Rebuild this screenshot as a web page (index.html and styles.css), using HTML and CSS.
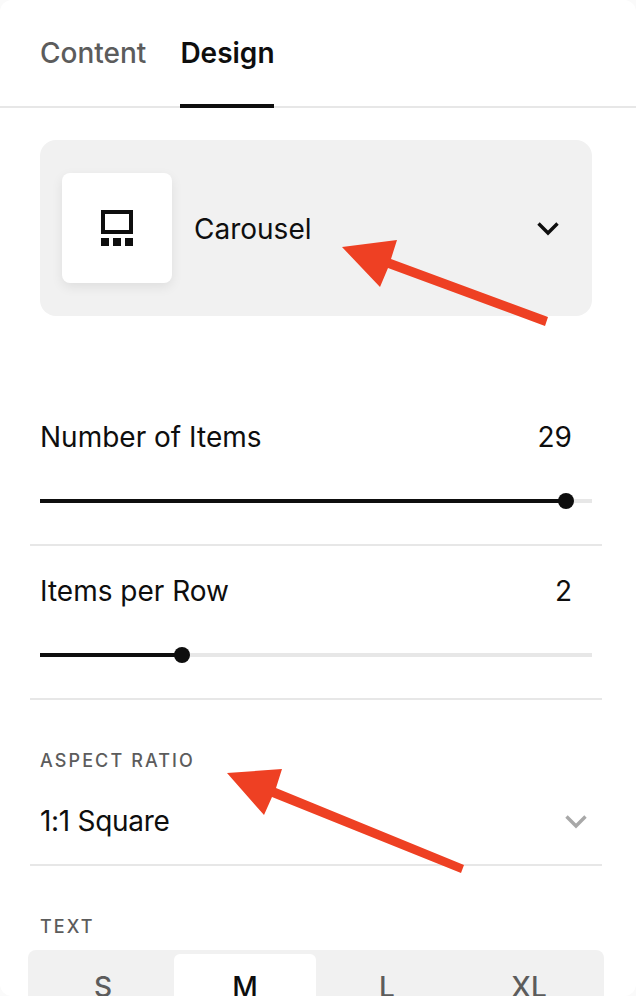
FILE: index.html
```html
<!DOCTYPE html>
<html lang="en">
<head>
<meta charset="utf-8">
<title>Design panel</title>
<link rel="stylesheet" href="styles.css">
</head>
<body>
<div class="panel">
  <nav class="tabs">
    <span class="tab">Content</span>
    <span class="tab active">Design</span>
  </nav>
  <div class="layout-card">
    <div class="icon-box">
      <svg width="32" height="36" viewBox="0 0 32 36" class="carousel-icon"><path fill="#0e0e0e" fill-rule="evenodd" d="M0 0h32v24H0zM4 4v16h24V4z"/><path fill="#0e0e0e" d="M0 28h8v8H0zM12 28h8v8h-8zM24 28h8v8h-8z"/></svg>
    </div>
    <span class="layout-name">Carousel</span>
    <svg class="chev-dark" width="22" height="15" viewBox="0 0 22 15"><path d="M1.5 2.5l9.5 9.5 9.5-9.5" fill="none" stroke="#0e0e0e" stroke-width="3.4"/></svg>
  </div>
  <section class="slider-row first">
    <div class="slider-head"><span>Number of Items</span><span class="val">29</span></div>
    <div class="track"><div class="fill fill-items"><i class="thumb"></i></div></div>
  </section>
  <section class="slider-row">
    <div class="slider-head"><span>Items per Row</span><span class="val">2</span></div>
    <div class="track"><div class="fill fill-row"><i class="thumb"></i></div></div>
  </section>
  <section class="select-row">
    <div class="caps">ASPECT RATIO</div>
    <div class="select-value"><span class="select-text">1:1 Square</span>
      <svg width="22" height="15" viewBox="0 0 22 15"><path d="M1.5 2.5l9.5 9.5 9.5-9.5" fill="none" stroke="#a8a8a8" stroke-width="3.4"/></svg>
    </div>
  </section>
  <section class="text-row">
    <div class="caps">TEXT</div>
    <div class="segments">
      <span class="seg">S</span><span class="seg on">M</span><span class="seg">L</span><span class="seg">XL</span>
    </div>
  </section>
  <svg class="arrows" width="636" height="996" viewBox="0 0 636 996">
    <path fill="#ee4023" d="M342 247L397 240L391 259L548 317L545 326L388 268L380 287z"/>
    <path fill="#ee4023" d="M227 773L282 769L276 788L464 865L461 873L272 797L264 815z"/>
  </svg>
</div>
</body>
</html>
```
FILE: styles.css
```css
* { box-sizing: border-box; }
html, body { margin: 0; height: 100%; }
body { background: #fafafa; overflow: hidden; font-family: Inter, "Liberation Sans", sans-serif; color: #0e0e0e; }
.panel { position: relative; width: 636px; height: 996px; background: #fff; border-radius: 12px; overflow: hidden; }
.tabs { display: flex; gap: 34px; height: 108px; padding-left: 40px; border-bottom: 2px solid #e7e7e7; }
.tab { height: 108px; padding-top: 35px; font-size: 28px; line-height: 36px; font-weight: 500; color: #5c5c5c; }
.tab.active { color: #0e0e0e; border-bottom: 4px solid #0e0e0e; width: 94px; font-weight: 600; }
.layout-card { display: flex; align-items: center; height: 176px; margin: 32px 44px 0 40px; padding: 0 33px 0 22px; border-radius: 16px; background: #f1f1f1; }
.icon-box { display: flex; align-items: center; justify-content: center; width: 110px; height: 110px; border-radius: 8px; background: #fff; box-shadow: 0 4px 12px rgba(0,0,0,.08); }
.layout-name { flex: 1; margin-left: 22px; padding-top: 2px; font-size: 28px; line-height: 34px; }
.slider-row { height: 154px; margin: 0 34px 0 30px; padding: 0 10px; border-bottom: 2px solid #e7e7e7; }
.slider-row.first { margin-top: 76px; height: 154px; }
.slider-head { display: flex; justify-content: space-between; padding: 28px 20px 0 0; font-size: 28px; line-height: 34px; }
.track { position: relative; height: 4px; margin-top: 45px; background: #e7e7e7; }
.fill { position: relative; height: 4px; background: #0e0e0e; }
.fill-items { width: 526px; }
.fill-row { width: 142px; }
.thumb { position: absolute; right: -8px; top: -6px; width: 16px; height: 16px; border-radius: 50%; background: #0e0e0e; }
.caps { font-size: 18px; line-height: 22px; font-weight: 500; letter-spacing: 2.1px; color: #5c5c5c; }
.select-row { height: 166px; margin: 0 34px 0 30px; padding: 50px 10px 0; border-bottom: 2px solid #e7e7e7; }
.select-value { display: flex; justify-content: space-between; align-items: center; margin-top: 32px; padding-right: 5px; font-size: 28px; line-height: 34px; }
.select-text { letter-spacing: -0.3px; }
.text-row { padding: 50px 32px 0 28px; }
.text-row .caps { padding-left: 12px; }
.segments { display: flex; margin-top: 12px; padding: 4px; border-radius: 8px; background: #f1f1f1; height: 80px; }
.seg { flex: 1; padding-top: 16px; text-align: center; font-size: 28px; line-height: 34px; font-weight: 500; color: #5c5c5c; border-radius: 6px; }
.seg.on { background: #fff; color: #0e0e0e; }
.arrows { position: absolute; left: 0; top: 0; pointer-events: none; }
```
